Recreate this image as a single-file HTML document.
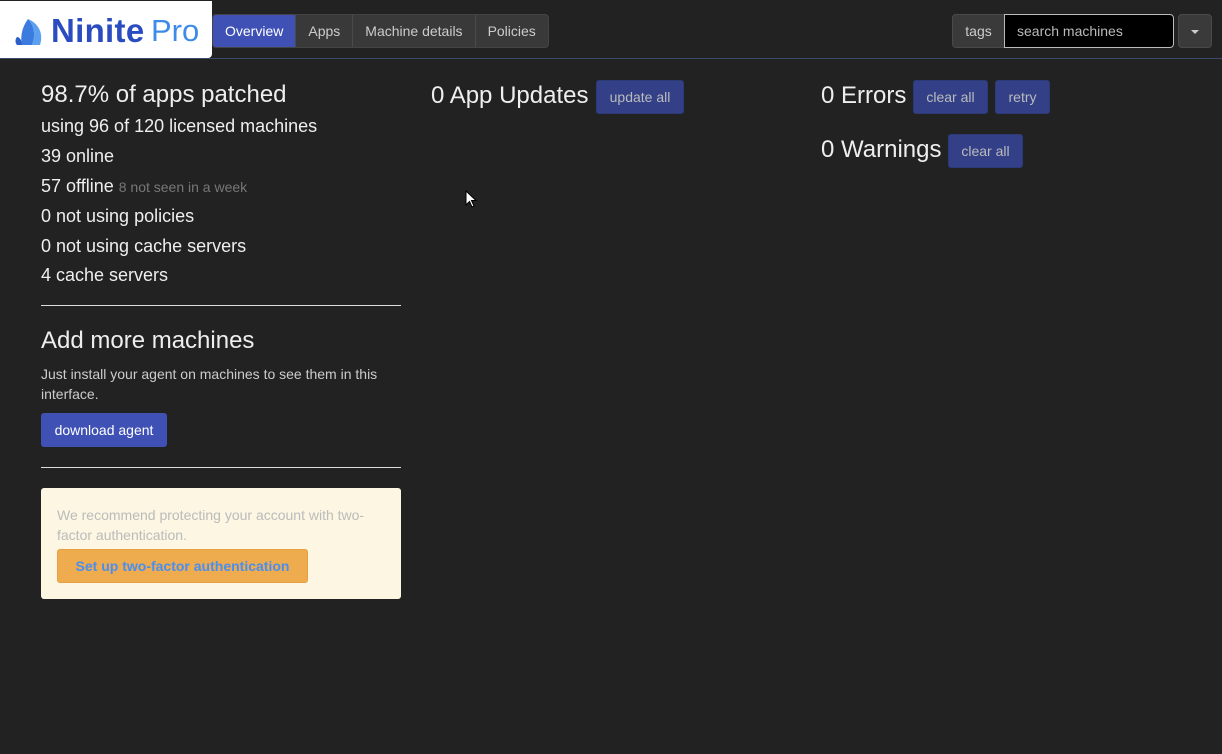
<!DOCTYPE html>
<html><head><meta charset="utf-8"><style>
*{box-sizing:border-box;margin:0;padding:0}
body{width:1222px;height:754px;background:#222;font-family:"Liberation Sans",Arial,sans-serif;color:#e8e8e8;position:relative;overflow:hidden}
.a{position:absolute;white-space:nowrap}
.hdr{position:absolute;left:0;top:0;width:1222px;height:59px;background:#222;border-bottom:1px solid #3a4a6a}
.logo{position:absolute;left:0;top:1px;width:212px;height:57px;background:#fff;border-radius:0 0 4px 0}
.nav{position:absolute;left:212px;top:14px;height:34px;display:flex;border:1px solid #444;border-radius:4px;overflow:hidden;background:#393939}
.nav div{padding:0 12px;line-height:32px;font-size:14px;color:#ccc;border-left:1px solid #4a4a4a}
.nav div:first-child{background:#3f51b5;color:#fff;border-left:none}
.btn{position:absolute;background:#334088;color:#bbb;font-size:14px;line-height:33px;text-align:center;border-radius:3px;border:1px solid #2d3a78}
.big{font-size:24px;color:#eee}
.t{font-size:18px;color:#eee}
hr{position:absolute;border:none;border-top:1px solid #ddd;height:0;width:360px;left:41px}
</style></head><body>
<div class="hdr"></div>
<div class="logo">
<svg class="a" style="left:14px;top:15px" width="32" height="32" viewBox="0 0 32 30"><path d="M14 2 C20 8 22 18 18 28 L8 28 C6 20 8 10 14 2Z" fill="#3b7be0"/><path d="M14 2 C24 6 30 16 26 28 L18 28 C22 18 20 8 14 2Z" fill="#5da0f2"/><path d="M3 20 C6 20 8 24 8 28 L3 28 C1 26 1 22 3 20Z" fill="#2b5fc8"/></svg>
<div class="a" style="left:51px;top:11px;font-size:33px;font-weight:bold;color:#2b4cc0;letter-spacing:0.3px">Ninite</div>
<div class="a" style="left:151px;top:12px;font-size:31px;color:#3d8be8">Pro</div>
</div>
<div class="nav"><div>Overview</div><div>Apps</div><div>Machine details</div><div>Policies</div></div>
<div class="a" style="left:952px;top:14px;width:53px;height:34px;background:#3a3a3a;border:1px solid #4a4a4a;border-radius:4px 0 0 4px;color:#ccc;font-size:14px;line-height:32px;text-align:center">tags</div>
<div class="a" style="left:1004px;top:14px;width:170px;height:34px;background:#000;border:1px solid #bbb;border-radius:0 4px 4px 0;color:#bbb;font-size:14px;line-height:32px;padding-left:12px">search machines</div>
<div class="a" style="left:1178px;top:14px;width:34px;height:34px;background:#3a3a3a;border:1px solid #4a4a4a;border-radius:4px"><div style="position:absolute;left:12px;top:15px;border-left:4px solid transparent;border-right:4px solid transparent;border-top:4px solid #ccc"></div></div>

<div class="a big" style="left:41px;top:81px">98.7% of apps patched</div>
<div class="a t" style="left:41px;top:116px">using 96 of 120 licensed machines</div>
<div class="a t" style="left:41px;top:146px">39 online</div>
<div class="a t" style="left:41px;top:176px">57 offline <span style="font-size:14px;color:#777">8 not seen in a week</span></div>
<div class="a t" style="left:41px;top:206px">0 not using policies</div>
<div class="a t" style="left:41px;top:236px">0 not using cache servers</div>
<div class="a t" style="left:41px;top:265px">4 cache servers</div>
<hr style="top:305px">
<div class="a big" style="left:41px;top:327px">Add more machines</div>
<div class="a" style="left:41px;top:364px;font-size:14px;line-height:20px;color:#ccc;white-space:normal;width:360px">Just install your agent on machines to see them in this interface.</div>
<div class="a" style="left:41px;top:413px;width:126px;height:34px;background:#3f51b5;border-radius:3px;color:#fff;font-size:14px;line-height:34px;text-align:center">download agent</div>
<hr style="top:467px">
<div class="a" style="left:41px;top:488px;width:360px;height:111px;background:#fcf6e2;border-radius:3px"></div>
<div class="a" style="left:57px;top:505px;font-size:14px;line-height:20px;color:#bbb;white-space:normal;width:320px">We recommend protecting your account with two-factor authentication.</div>
<div class="a" style="left:57px;top:549px;width:251px;height:34px;background:#efac4e;border:1px solid #e6a040;border-radius:3px;color:#4a8ef0;font-weight:bold;font-size:14px;line-height:32px;text-align:center">Set up two-factor authentication</div>

<div class="a big" style="left:431px;top:82px">0 App Updates</div>
<div class="btn" style="left:596px;top:80px;width:88px;height:34px">update all</div>
<div class="a big" style="left:821px;top:82px">0 Errors</div>
<div class="btn" style="left:913px;top:80px;width:75px;height:34px">clear all</div>
<div class="btn" style="left:995px;top:80px;width:55px;height:34px">retry</div>
<div class="a big" style="left:821px;top:136px">0 Warnings</div>
<div class="btn" style="left:948px;top:134px;width:75px;height:34px">clear all</div>
<svg class="a" style="left:465px;top:190px" width="12" height="19" viewBox="0 0 12 19"><path d="M1 1 L1 15 L4.5 11.5 L7 17 L9 16 L6.5 10.5 L11 10.5 Z" fill="#fff" stroke="#000" stroke-width="1"/></svg>
</body></html>
